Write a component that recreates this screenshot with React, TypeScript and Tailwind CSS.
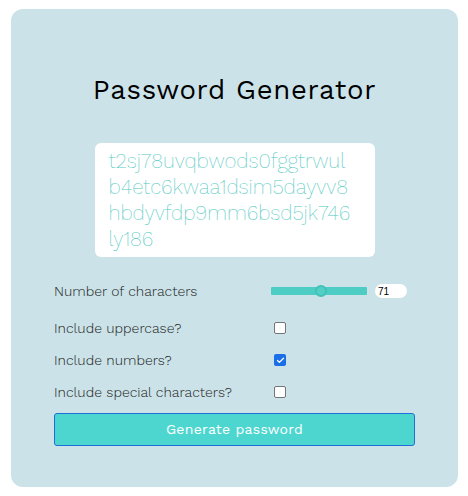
import { Check } from "lucide-react";

const lines = ["t2sj78uvqbwods0fggtrwul", "b4etc6kwaa1dsim5dayvv8", "hbdyvfdp9mm6bsd5jk746", "ly186"];

function Box({ checked }: { checked?: boolean }) {
  if (checked) {
    return (
      <span className="flex h-[12px] w-[12px] items-center justify-center rounded-[2px] bg-[#1a6fe8]">
        <Check size={9} strokeWidth={3.5} className="text-white" />
      </span>
    );
  }
  return <span className="block h-[12px] w-[12px] rounded-[2px] border border-[#767676] bg-white" />;
}

export default function App() {
  const rows = [
    { label: "Include uppercase?", checked: false },
    { label: "Include numbers?", checked: true },
    { label: "Include special characters?", checked: false },
  ];
  return (
    <div className="h-[496px] w-[468px] bg-white pl-[11px] pt-[9px] font-['Work_Sans','Inter',sans-serif]">
      <div className="flex h-[478px] w-[447px] flex-col rounded-[12px] bg-[#cae2e8] px-[43px] pt-[64px]">
        <h1 className="text-center text-[27.5px] leading-[34px] tracking-[0.7px] text-black">Password Generator</h1>

        <div className="mx-auto mt-[36px] h-[114px] w-[280px] rounded-[6px] bg-white px-[14px] pt-[5px] text-[20.5px] font-extralight leading-[26px] text-[#4fc9c0]">
          {lines.map((l) => (
            <div key={l}>{l}</div>
          ))}
        </div>

        <div className="mt-[23px] grid grid-cols-[217px_1fr] items-center text-[14px] font-light text-[#222]">
          <div className="flex h-[22px] items-center">Number of characters</div>
          <div className="flex items-center gap-[8px]">
            <div className="relative h-[8px] w-[96px] rounded-[1px] bg-[#4ecdc4]">
              <span className="absolute left-[44px] top-[-2px] h-[12px] w-[12px] rounded-full border-2 border-[#44c0b6] bg-[#52cfc6]" />
            </div>
            <div className="flex h-[14px] w-[32px] items-center rounded-full bg-white pl-[3px] font-['Liberation_Sans',sans-serif] text-[10px] text-black">
              71
            </div>
          </div>
          {rows.map((r, i) => (
            <div key={r.label} className="contents">
              <div className={`${i === 0 ? "mt-[15px]" : "mt-[10px]"} flex h-[22px] items-center`}>{r.label}</div>
              <div className={`${i === 0 ? "mt-[15px]" : "mt-[10px]"} flex h-[22px] items-center pl-[3px]`}>
                <Box checked={r.checked} />
              </div>
            </div>
          ))}
        </div>

        <button className="mt-[10px] h-[33px] w-[361px] rounded-[3px] border border-[#1f6fd8] bg-[#4dd6cf] text-[14px] tracking-[0.3px] text-white">
          Generate password
        </button>
      </div>
    </div>
  );
}
